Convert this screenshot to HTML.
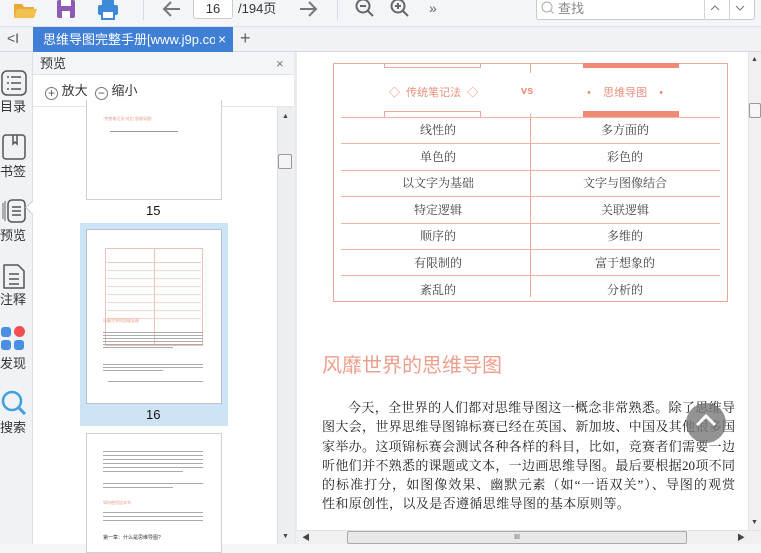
<!DOCTYPE html>
<html><head><meta charset="utf-8"><style>
*{margin:0;padding:0;box-sizing:border-box}
body{width:761px;height:544px;overflow:hidden;background:#f3f5f8;font-family:"Liberation Sans","Noto Sans CJK SC",sans-serif;position:relative;color:#333}
.a{position:absolute}
.serif{font-family:"Liberation Serif","Noto Serif CJK SC",serif}
.side{font-size:13px;color:#333;text-align:center;width:32px}
.row{position:absolute;left:0;width:395px;height:26.6px;font-size:12px;color:#444}
.row span{position:absolute;top:4px;width:190px;text-align:center}
.hl{position:absolute;left:8px;width:379px;border-top:1px solid #eeb4a6}
.ln{font-size:13px;line-height:19.3px;height:19.3px;color:#222;text-align:justify;text-align-last:justify;text-justify:inter-character;white-space:nowrap;overflow:visible}
.tl{background:#aaa;height:1px;position:absolute}
</style></head><body>
<div class="a" style="left:0;top:0;width:761px;height:27px;background:#f3f5f8;border-bottom:1px solid #e0e3e8"></div>
<svg class="a" style="left:12px;top:0" width="26" height="20"><path d="M2 4h8l2 3h10v11H2z" fill="#e6a93a"/><path d="M5 9h20l-3 9H2z" fill="#f2c04c"/></svg>
<svg class="a" style="left:56px;top:0" width="20" height="20"><rect x="1" y="0" width="18" height="18" rx="2" fill="#8e5bb5"/><rect x="5" y="0" width="10" height="6" fill="#fff"/><rect x="6" y="11" width="8" height="7" fill="#fff"/></svg>
<svg class="a" style="left:97px;top:0" width="22" height="20"><rect x="5" y="0" width="12" height="5" fill="#3d8bd6"/><rect x="1" y="5" width="20" height="10" rx="2" fill="#3d8bd6"/><rect x="5" y="11" width="12" height="8" fill="#fff" stroke="#3d8bd6" stroke-width="2"/></svg>
<div class="a" style="left:143px;top:0;width:1px;height:20px;background:#d8dbe0"></div>
<svg class="a" style="left:162px;top:0" width="20" height="18"><path d="M18 9H3M9 2L2 9l7 7" stroke="#777" stroke-width="2" fill="none"/></svg>
<div class="a" style="left:193px;top:-2px;width:40px;height:21px;background:#fff;border:1px solid #ccc;border-radius:3px;font-size:13px;text-align:center;line-height:19px">16</div>
<div class="a" style="left:238px;top:0;font-size:13px;line-height:18px;color:#333">/194页</div>
<svg class="a" style="left:298px;top:0" width="20" height="18"><path d="M2 9h15M11 2l7 7-7 7" stroke="#777" stroke-width="2" fill="none"/></svg>
<div class="a" style="left:337px;top:0;width:1px;height:20px;background:#d8dbe0"></div>
<svg class="a" style="left:355px;top:-2px" width="20" height="20"><circle cx="8" cy="8" r="6.5" stroke="#666" stroke-width="2" fill="none"/><path d="M5 8h6M13 13l5 5" stroke="#666" stroke-width="2"/></svg>
<svg class="a" style="left:390px;top:-2px" width="20" height="20"><circle cx="8" cy="8" r="6.5" stroke="#666" stroke-width="2" fill="none"/><path d="M5 8h6M8 5v6M13 13l5 5" stroke="#666" stroke-width="2"/></svg>
<div class="a" style="left:429px;top:0;font-size:14px;color:#666">»</div>
<div class="a" style="left:536px;top:-2px;width:219px;height:22px;background:#fff;border:1px solid #c8ccd2;border-radius:3px"></div>
<svg class="a" style="left:541px;top:1px" width="14" height="14"><circle cx="6" cy="6" r="5" stroke="#aaa" fill="none"/><path d="M9.5 9.5l3 3" stroke="#aaa"/></svg>
<div class="a" style="left:558px;top:0;font-size:13px;color:#888;line-height:17px">查找</div>
<div class="a" style="left:704px;top:-2px;width:1px;height:22px;background:#d0d3d8"></div>
<div class="a" style="left:729px;top:-2px;width:1px;height:22px;background:#d0d3d8"></div>
<svg class="a" style="left:711px;top:4px" width="40" height="10"><path d="M0 6l4-4 4 4M25 2l4 4 4-4" stroke="#777" fill="none"/></svg>
<div class="a" style="left:0;top:27px;width:761px;height:25px;background:#f0f2f5;border-bottom:1px solid #d6d9de"></div>
<div class="a" style="left:7px;top:30px;font-size:14px;color:#555">&lt;I</div>
<div class="a" style="left:33px;top:27px;width:200px;height:25px;background:#3f7fd6;color:#fff;font-size:13px;line-height:25px;padding-left:10px;white-space:nowrap;overflow:hidden">思维导图完整手册[www.j9p.cor</div>
<div class="a" style="left:33px;top:27px;width:200px;height:25px;"><span style="position:absolute;left:182px;top:0;line-height:24px;color:#fff;font-size:14px;background:#3f7fd6;padding:0 3px">×</span></div>
<div class="a" style="left:240px;top:28px;font-size:18px;color:#666">+</div>
<div class="a" style="left:0;top:52px;width:33px;height:492px;background:#f0f2f5;border-right:1px solid #dcdfe4"></div>
<svg class="a" style="left:1px;top:70px" width="26" height="26"><rect x="1" y="1" width="24" height="24" rx="5" stroke="#555" stroke-width="1.5" fill="none"/><path d="M6 7h2M10 7h10M6 13h2M10 13h10M6 19h2M10 19h10" stroke="#555" stroke-width="1.6"/></svg>
<div class="a side" style="left:-3px;top:96px">目录</div>
<svg class="a" style="left:2px;top:134px" width="24" height="26"><rect x="1" y="1" width="22" height="24" rx="3" stroke="#555" stroke-width="1.5" fill="none"/><path d="M11 1v9l2-2 2 2V1" stroke="#555" stroke-width="1.5" fill="none"/></svg>
<div class="a side" style="left:-3px;top:161px">书签</div>
<svg class="a" style="left:1px;top:197px" width="26" height="28"><path d="M4 4v20M2 6v16" stroke="#666"/><rect x="7" y="3" width="17" height="22" rx="4" stroke="#555" stroke-width="1.5" fill="#f0f2f5"/><path d="M11 10h9M11 14h9M11 18h9" stroke="#555" stroke-width="1.5"/></svg>
<div class="a" style="left:27px;top:203px;width:9px;height:9px;background:#fff;border-left:1px solid #ccc;border-bottom:1px solid #ccc;transform:rotate(45deg)"></div>
<div class="a side" style="left:-3px;top:225px">预览</div>
<svg class="a" style="left:2px;top:262px" width="24" height="28"><path d="M2 3h14l6 6v17H2z" stroke="#555" stroke-width="1.5" fill="none" stroke-linejoin="round"/><path d="M7 12h10M7 17h10M7 22h10" stroke="#555" stroke-width="1.5"/></svg>
<div class="a side" style="left:-3px;top:289px">注释</div>
<div class="a" style="left:1px;top:327px;width:10px;height:10px;background:#4a90e2;border-radius:3px"></div>
<div class="a" style="left:14px;top:326px;width:11px;height:11px;background:#f25050;border-radius:50%"></div>
<div class="a" style="left:1px;top:340px;width:10px;height:10px;background:#4a90e2;border-radius:3px"></div>
<div class="a" style="left:14px;top:340px;width:10px;height:10px;background:#4a90e2;border-radius:3px"></div>
<div class="a side" style="left:-3px;top:353px">发现</div>
<svg class="a" style="left:1px;top:390px" width="26" height="26"><circle cx="11" cy="11" r="9" stroke="#3fa0e0" stroke-width="2.5" fill="none"/><path d="M18 18l6 6" stroke="#3fa0e0" stroke-width="3"/></svg>
<div class="a side" style="left:-3px;top:417px">搜索</div>
<div class="a" style="left:33px;top:52px;width:261px;height:23px;background:#f3f5f8;border-bottom:1px solid #e0e3e8;font-size:13px;line-height:23px;padding-left:7px">预览<span style="position:absolute;left:243px;color:#777">×</span></div>
<div class="a" style="left:33px;top:75px;width:261px;height:32px;background:#fff;border-bottom:1px solid #e6e8ec;font-size:13px;line-height:32px;padding-left:12px;color:#333">
<span style="display:inline-block;width:13px;height:13px;border:1px solid #777;border-radius:50%;vertical-align:-2px;text-align:center;line-height:10px;font-size:12px;color:#555">+</span> 放大 &nbsp;<span style="display:inline-block;width:13px;height:13px;border:1px solid #777;border-radius:50%;vertical-align:-2px;text-align:center;line-height:10px;font-size:12px;color:#555">−</span> 缩小</div>
<div class="a" style="left:33px;top:107px;width:244px;height:437px;background:#fff"></div>
<div class="a" style="left:86px;top:100px;width:136px;height:100px;background:#fff;border:1px solid #d0d0d0;border-top:none"></div>
<div class="a" style="left:103px;top:116px;font-size:4px;color:#e89a88">“传统笔记法”对比“思维导图”</div>
<div class="tl" style="left:110px;top:131px;width:68px;background:#999"></div>
<div class="a" style="left:146px;top:203px;font-size:13px;color:#111">15</div>
<div class="a" style="left:80px;top:223px;width:148px;height:203px;background:#cde4f7"></div>
<div class="a" style="left:86px;top:229px;width:136px;height:175px;background:#fff;border:1px solid #b9c2cc"></div>
<div class="a" style="left:105px;top:248px;width:98px;height:98px;border:1px solid #efc0b4"></div>
<div class="a" style="left:154px;top:248px;width:1px;height:98px;background:#efc0b4"></div>
<div class="a" style="left:107px;top:262px;width:94px;border-top:1px solid #f0c8bc"></div>
<div class="a" style="left:107px;top:270px;width:94px;border-top:1px solid #f3d6ce"></div>
<div class="a" style="left:107px;top:278px;width:94px;border-top:1px solid #f3d6ce"></div>
<div class="a" style="left:107px;top:286px;width:94px;border-top:1px solid #f3d6ce"></div>
<div class="a" style="left:107px;top:294px;width:94px;border-top:1px solid #f3d6ce"></div>
<div class="a" style="left:107px;top:302px;width:94px;border-top:1px solid #f3d6ce"></div>
<div class="a" style="left:107px;top:310px;width:94px;border-top:1px solid #f3d6ce"></div>
<div class="a" style="left:107px;top:318px;width:94px;border-top:1px solid #f3d6ce"></div>
<div class="a" style="left:103px;top:318px;font-size:4px;color:#e89a88">风靡世界的思维导图</div>
<div class="tl" style="left:103px;top:332px;width:100px"></div><div class="tl" style="left:103px;top:335px;width:100px"></div><div class="tl" style="left:103px;top:338px;width:100px"></div><div class="tl" style="left:103px;top:341px;width:100px"></div><div class="tl" style="left:103px;top:344px;width:100px"></div><div class="tl" style="left:103px;top:347px;width:70px"></div>
<div class="tl" style="left:103px;top:364px;width:100px"></div><div class="tl" style="left:103px;top:367px;width:100px"></div><div class="tl" style="left:103px;top:370px;width:60px"></div>
<div class="tl" style="left:108px;top:381px;width:95px"></div>
<div class="a" style="left:146px;top:407px;font-size:13px;color:#111">16</div>
<div class="a" style="left:86px;top:433px;width:136px;height:120px;background:#fff;border:1px solid #d0d0d0"></div>
<div class="tl" style="left:103px;top:451px;width:100px"></div><div class="tl" style="left:103px;top:455px;width:100px"></div><div class="tl" style="left:103px;top:459px;width:100px"></div><div class="tl" style="left:103px;top:463px;width:100px"></div><div class="tl" style="left:103px;top:467px;width:100px"></div><div class="tl" style="left:103px;top:471px;width:80px"></div>
<div class="tl" style="left:103px;top:483px;width:100px"></div><div class="tl" style="left:103px;top:487px;width:70px"></div>
<div class="a" style="left:103px;top:500px;font-size:4px;color:#e89a88">如何使用这本书</div>
<div class="tl" style="left:103px;top:512px;width:100px"></div><div class="tl" style="left:103px;top:516px;width:100px"></div><div class="tl" style="left:103px;top:520px;width:100px"></div>
<div class="a" style="left:103px;top:534px;font-size:5px;color:#333">第一章：什么是思维导图?</div>
<div class="a" style="left:277px;top:107px;width:16px;height:437px;background:#eceef1;border-left:1px solid #dde0e4"></div>
<div class="a" style="left:282px;top:113px;font-size:7px;color:#444">▲</div>
<div class="a" style="left:278px;top:154px;width:14px;height:15px;background:#f4f4f4;border:1px solid #999;border-radius:2px"></div>
<div class="a" style="left:282px;top:533px;font-size:7px;color:#444">▼</div>
<div class="a" style="left:294px;top:52px;width:3px;height:492px;background:#e8eaee"></div>
<div class="a" style="left:297px;top:52px;width:451px;height:478px;background:#fff;overflow:hidden">
<div class="a" style="left:36px;top:11px;width:395px;height:239px;border:1px solid #eba898"></div>
<div class="a" style="left:87px;top:11px;width:97px;height:5px;border:1px solid #eba898;border-top:none"></div>
<div class="a" style="left:286px;top:11px;width:96px;height:5px;background:#ee8a76"></div>
<div class="a" style="left:87px;top:59px;width:97px;height:6px;border:1px solid #eba898;border-bottom:none"></div>
<div class="a" style="left:286px;top:59px;width:96px;height:6px;background:#ee8a76"></div>
<div class="a" style="left:233px;top:11px;width:1px;height:10px;background:#eba898"></div>
<div class="a" style="left:233px;top:62px;width:1px;height:183px;background:#eba898"></div>
<div class="a" style="left:92px;top:32px;font-size:11px;color:#e8907c;white-space:nowrap">◇ &nbsp;传统笔记法 &nbsp;◇</div>
<div class="a" style="left:224px;top:33px;font-size:11px;font-weight:bold;color:#e8907c">vs</div>
<div class="a" style="left:290px;top:32px;font-size:11px;color:#e8907c;white-space:nowrap">• &nbsp;&nbsp;&nbsp;思维导图 &nbsp;&nbsp;&nbsp;•</div>
<div class="a serif" style="left:36px;top:65px;width:395px;height:185px">
<div class="hl" style="top:0"></div><div class="hl" style="top:26px"></div><div class="hl" style="top:53px"></div><div class="hl" style="top:79px"></div><div class="hl" style="top:106px"></div><div class="hl" style="top:132px"></div><div class="hl" style="top:158px"></div>
<div class="row" style="top:0"><span style="left:10px">线性的</span><span style="left:197px">多方面的</span></div>
<div class="row" style="top:26.6px"><span style="left:10px">单色的</span><span style="left:197px">彩色的</span></div>
<div class="row" style="top:53.2px"><span style="left:10px">以文字为基础</span><span style="left:197px">文字与图像结合</span></div>
<div class="row" style="top:79.8px"><span style="left:10px">特定逻辑</span><span style="left:197px">关联逻辑</span></div>
<div class="row" style="top:106.4px"><span style="left:10px">顺序的</span><span style="left:197px">多维的</span></div>
<div class="row" style="top:133px"><span style="left:10px">有限制的</span><span style="left:197px">富于想象的</span></div>
<div class="row" style="top:159.6px"><span style="left:10px">紊乱的</span><span style="left:197px">分析的</span></div>
</div>
<div class="a" style="left:25px;top:297px;font-size:20px;color:#ec9f8c;white-space:nowrap">风靡世界的思维导图</div>
<div class="a serif" style="left:25px;top:346px;width:413px">
<div class="ln" style="margin-left:26px">今天，全世界的人们都对思维导图这一概念非常熟悉。除了思维导</div>
<div class="ln">图大会，世界思维导图锦标赛已经在英国、新加坡、中国及其他很多国</div>
<div class="ln">家举办。这项锦标赛会测试各种各样的科目，比如，竞赛者们需要一边</div>
<div class="ln">听他们并不熟悉的课题或文本，一边画思维导图。最后要根据20项不同</div>
<div class="ln">的标准打分，如图像效果、幽默元素（如“一语双关”）、导图的观赏</div>
<div class="ln" style="text-align-last:left;letter-spacing:0.4px">性和原创性，以及是否遵循思维导图的基本原则等。</div>
</div>
</div>
<div class="a" style="left:686px;top:403px;width:40px;height:40px;border-radius:50%;background:rgba(120,120,120,0.8)"></div>
<svg class="a" style="left:694px;top:412px" width="24" height="16"><path d="M3 13l9-9 9 9" stroke="#fff" stroke-width="3" fill="none"/></svg>
<div class="a" style="left:748px;top:52px;width:13px;height:478px;background:#f0f0f0;border-left:1px solid #e3e3e3"></div>
<div class="a" style="left:751px;top:56px;font-size:7px;color:#444">▲</div>
<div class="a" style="left:749px;top:103px;width:12px;height:15px;background:#f6f6f6;border:1px solid #999;border-radius:2px"></div>
<div class="a" style="left:751px;top:519px;font-size:7px;color:#444">▼</div>
<div class="a" style="left:296px;top:530px;width:465px;height:14px;background:#f0f0f0;border-top:1px solid #e3e3e3"></div>
<div class="a" style="left:302px;top:532px;font-size:8px;color:#444">◀</div>
<div class="a" style="left:347px;top:531px;width:340px;height:13px;background:#e8e8e8;border:1px solid #aaa;border-radius:2px;font-size:7px;text-align:center;color:#555;line-height:11px">III</div>
<div class="a" style="left:737px;top:532px;font-size:8px;color:#444">▶</div>
</body></html>
